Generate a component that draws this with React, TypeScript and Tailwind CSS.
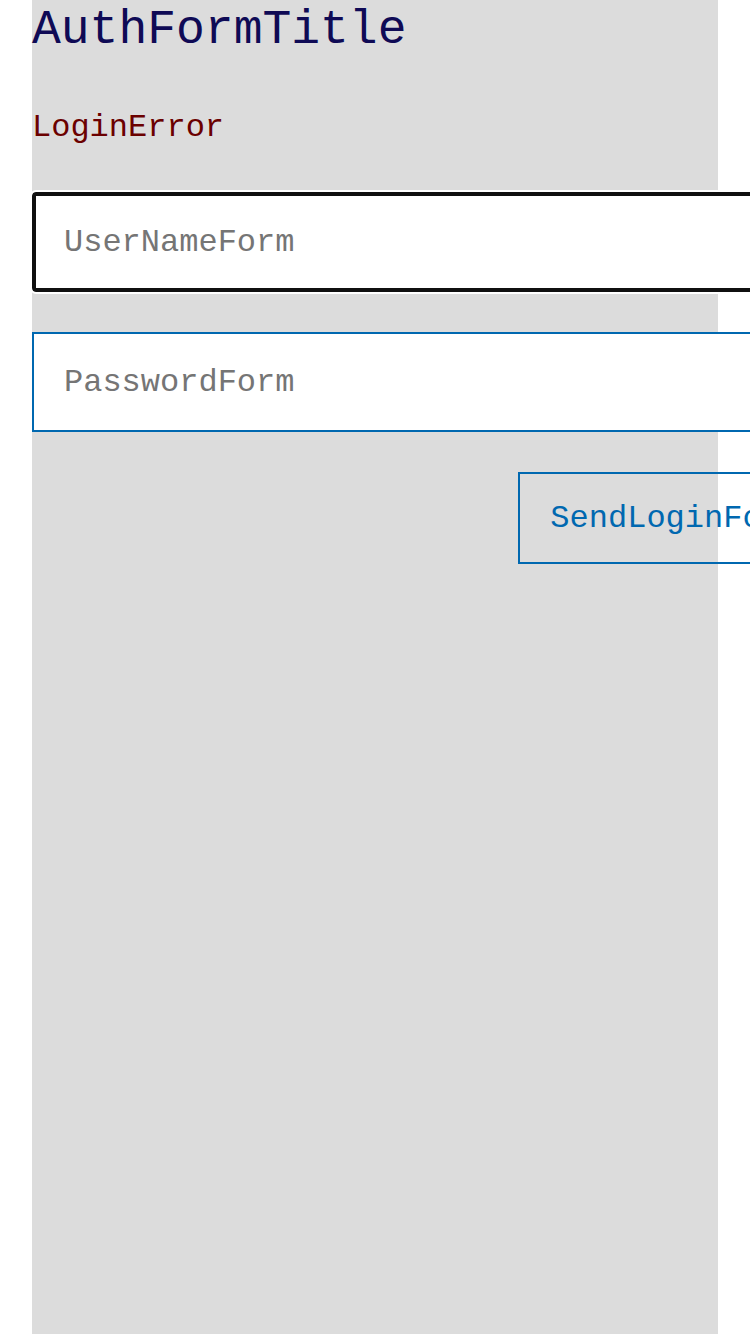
export default function App() {
  return (
    <div className="min-h-screen w-full overflow-hidden bg-white font-['Liberation_Mono',monospace]">
      <div className="ml-8 flex min-h-[1334px] w-[686px] flex-col bg-[#dcdcdc]">
        <h1 className="pt-[2px] text-[48px] leading-[56px] text-[#0f0a55]">AuthFormTitle</h1>
        <p className="mt-[51px] text-[32px] leading-[37px] text-[#6b0000]">LoginError</p>

        <form className="mt-[46px] flex w-[800px] flex-col gap-10">
          <input
            type="text"
            placeholder="UserNameForm"
            className="h-[100px] w-full rounded-[4px] border-4 border-[#101010] bg-white px-[28px] text-[32px] outline-2 outline-white placeholder:text-[#757575]"
          />
          <input
            type="password"
            placeholder="PasswordForm"
            className="h-[100px] w-full border-2 border-[#0068b0] bg-white px-[30px] text-[32px] outline-none placeholder:text-[#757575]"
          />
          <button
            type="button"
            className="h-[92px] self-end border-2 border-[#0068b0] bg-transparent px-[30px] pt-[2px] text-[32px] text-[#0068b0]"
          >
            SendLoginForm
          </button>
        </form>
      </div>
    </div>
  )
}
